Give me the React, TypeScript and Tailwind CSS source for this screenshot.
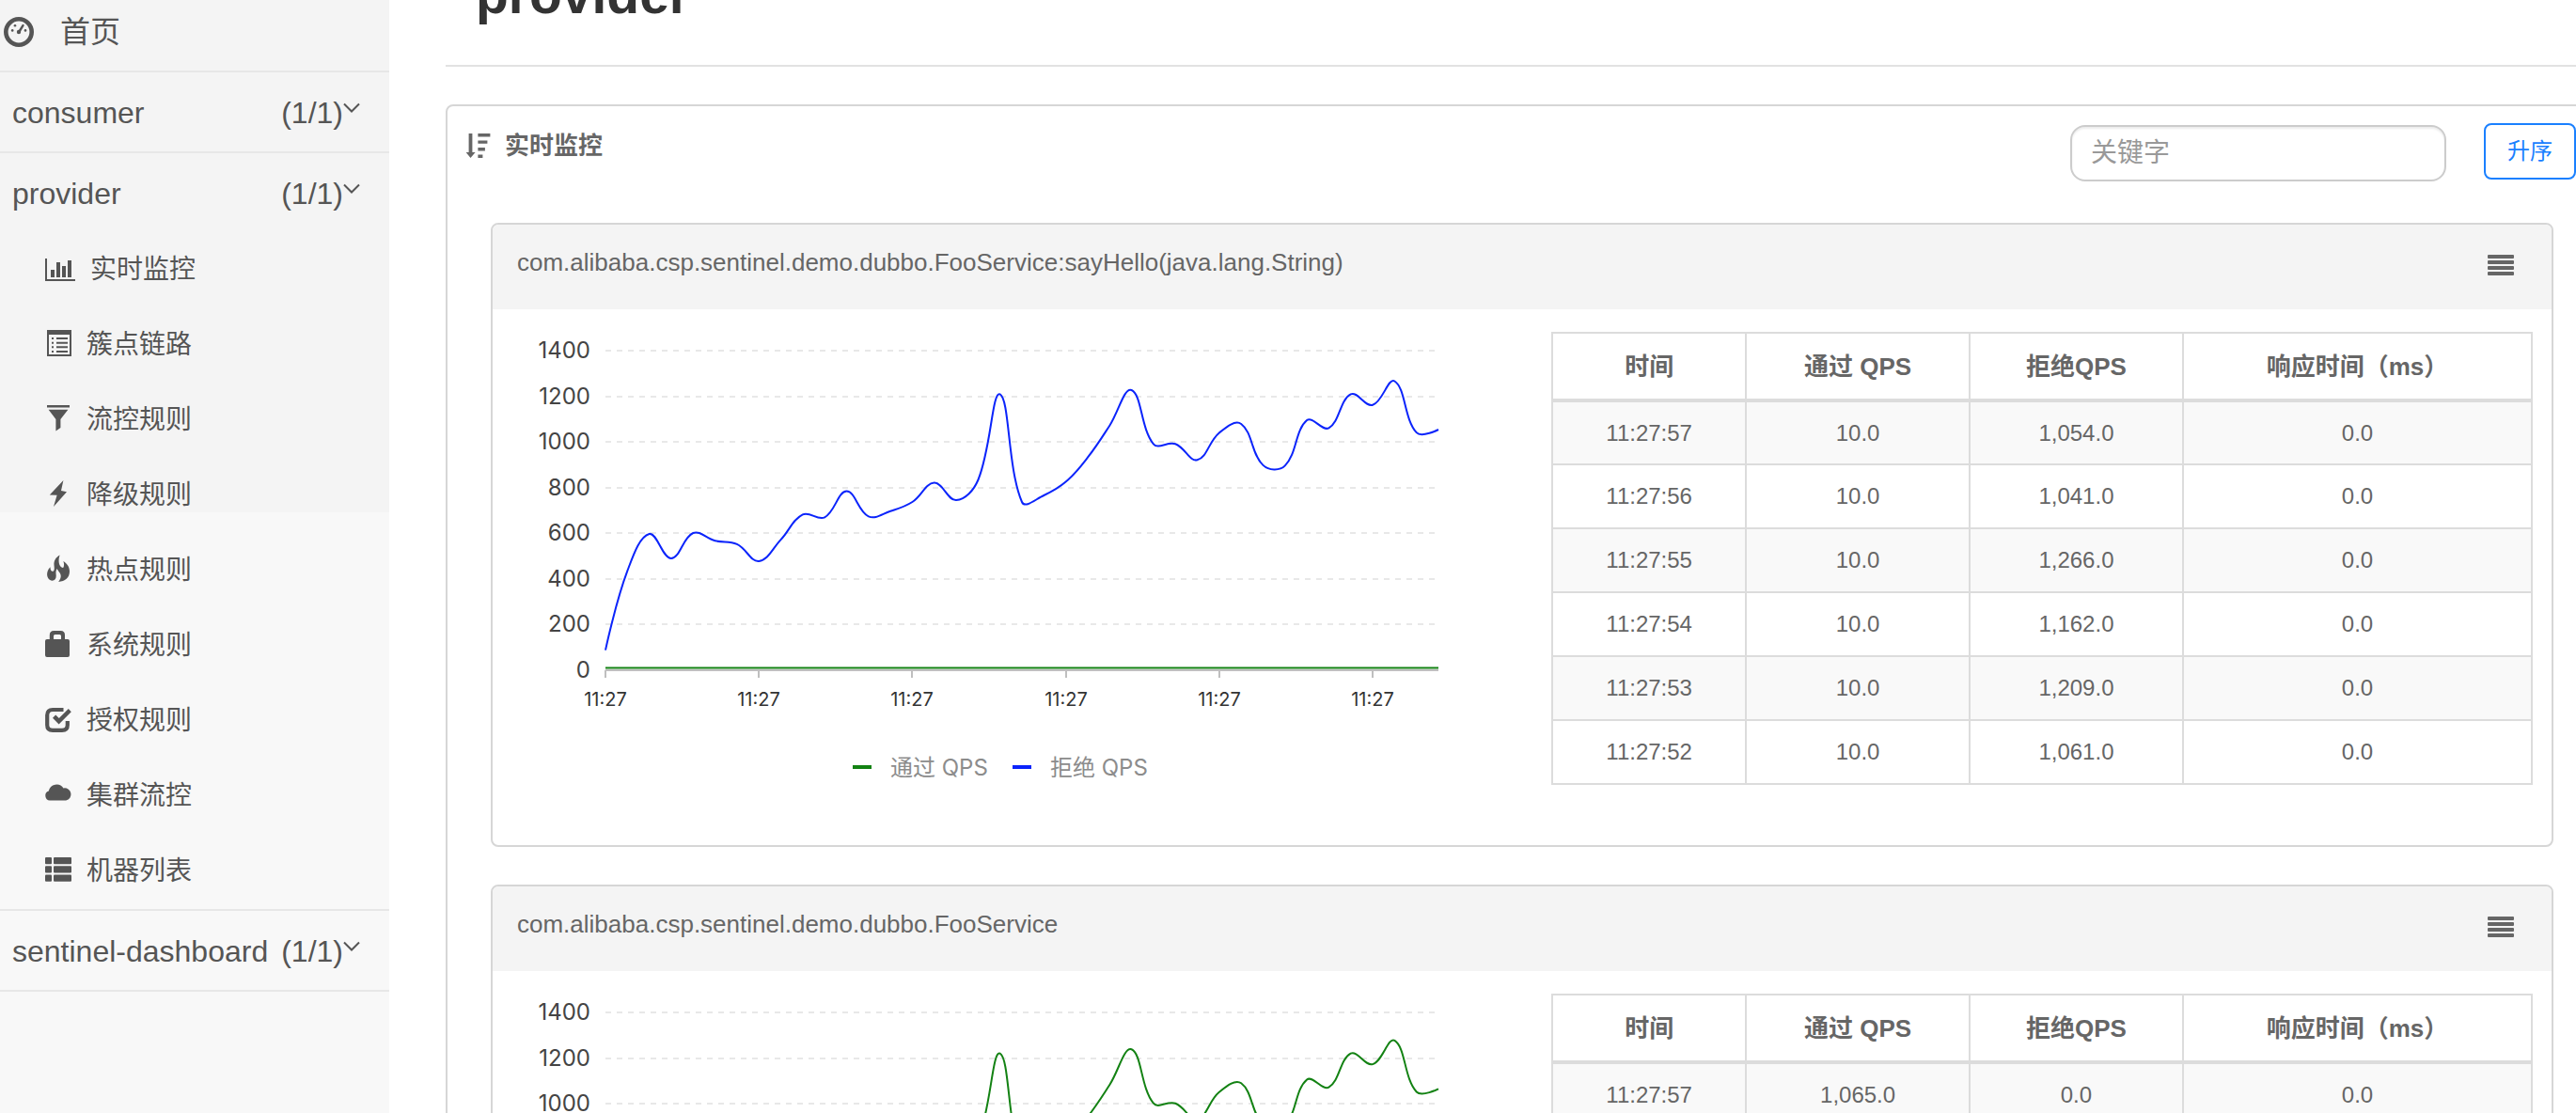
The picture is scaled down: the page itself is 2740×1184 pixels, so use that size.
import React from "react";

type Row = { time: string; pass: string; block: string; rt: string };

type Resource = {
  name: string;
  pass: number[];
  block: number[];
  rows: Row[];
};

const TOTALS = [
  88, 435, 597, 490, 601, 567, 552, 478, 572, 682, 670, 784, 674, 697, 737, 821, 745, 834, 1209, 737,
  766, 825, 932, 1072, 1227, 991, 991, 921, 1040, 1079, 898, 896, 1095, 1061, 1209, 1162, 1266, 1041, 1054,
];

const TIMES = ["11:27:57", "11:27:56", "11:27:55", "11:27:54", "11:27:53", "11:27:52"];
const BLOCKED = ["1,054.0", "1,041.0", "1,266.0", "1,162.0", "1,209.0", "1,061.0"];
const PASSED = ["1,065.0", "1,052.0", "1,277.0", "1,173.0", "1,220.0", "1,072.0"];

const RESOURCES: Resource[] = [
  {
    name: "com.alibaba.csp.sentinel.demo.dubbo.FooService:sayHello(java.lang.String)",
    pass: TOTALS.map(() => 10),
    block: TOTALS,
    rows: TIMES.map((time, i) => ({ time, pass: "10.0", block: BLOCKED[i], rt: "0.0" })),
  },
  {
    name: "com.alibaba.csp.sentinel.demo.dubbo.FooService",
    pass: TOTALS.map((v) => v + 11),
    block: TOTALS.map(() => 0),
    rows: TIMES.map((time, i) => ({ time, pass: PASSED[i], block: "0.0", rt: "0.0" })),
  },
];

/* ---------- chart ---------- */

const PLOT = { left: 120, right: 1006, top: 44, bottom: 384, max: 1400 };
const STEP = (PLOT.right - PLOT.left) / (TOTALS.length - 1);

function smoothPath(values: number[]): string {
  const pts = values.map((v, i) => [
    PLOT.left + i * STEP,
    PLOT.bottom - (v / PLOT.max) * (PLOT.bottom - PLOT.top),
  ]);
  const clampX = (x: number) => Math.min(PLOT.right, Math.max(PLOT.left, x));
  const clampY = (y: number) => Math.min(PLOT.bottom, Math.max(PLOT.top, y));
  const controls = pts.map((p, i) => {
    if (i === 0 || i === pts.length - 1) return [p, p];
    const prev = pts[i - 1];
    const next = pts[i + 1];
    const vx = (next[0] - prev[0]) * 0.4;
    const vy = (next[1] - prev[1]) * 0.4;
    const d0 = Math.hypot(p[0] - prev[0], p[1] - prev[1]);
    const d1 = Math.hypot(p[0] - next[0], p[1] - next[1]);
    const a = d0 / (d0 + d1);
    const b = d1 / (d0 + d1);
    return [
      [clampX(p[0] - vx * a), clampY(p[1] - vy * a)],
      [clampX(p[0] + vx * b), clampY(p[1] + vy * b)],
    ];
  });
  const f = (n: number) => n.toFixed(1);
  return pts
    .map((p, i) => {
      if (i === 0) return `M${f(p[0])} ${f(p[1])}`;
      const c1 = controls[i - 1][1];
      const c2 = controls[i][0];
      return `C${f(c1[0])} ${f(c1[1])} ${f(c2[0])} ${f(c2[1])} ${f(p[0])} ${f(p[1])}`;
    })
    .join("");
}

function QpsChart({ pass, block }: { pass: number[]; block: number[] }) {
  const levels = [0, 200, 400, 600, 800, 1000, 1200, 1400];
  const y = (v: number) => Math.round(PLOT.bottom - (v / PLOT.max) * (PLOT.bottom - PLOT.top));
  const ticks = [0, 7, 14, 21, 28, 35].map((i) => Math.round(PLOT.left + i * STEP));
  return (
    <svg
      viewBox="0 0 1126 520"
      className="block w-full font-['Inter','Noto_Sans_CJK_SC',sans-serif]"
      role="img"
      aria-label="QPS"
    >
      {levels.slice(1).map((v) => (
        <line key={v} x1={PLOT.left} x2={PLOT.right} y1={y(v)} y2={y(v)} stroke="#e8e8e8" strokeWidth="2" strokeDasharray="6 6" />
      ))}
      {levels.map((v) => (
        <text key={v} x="104" y={y(v) + 8} textAnchor="end" fontSize="24" fill="#444">
          {v}
        </text>
      ))}
      <line x1={PLOT.left} x2={PLOT.right} y1={PLOT.bottom} y2={PLOT.bottom} stroke="#bfbfbf" strokeWidth="2" />
      {ticks.map((x) => (
        <g key={x}>
          <line x1={x} x2={x} y1={PLOT.bottom} y2={PLOT.bottom + 8} stroke="#bfbfbf" strokeWidth="2" />
          <text x={x} y="422" textAnchor="middle" fontSize="20" fill="#333">
            11:27
          </text>
        </g>
      ))}
      <path d={smoothPath(block)} fill="none" stroke="#0b24fb" strokeWidth="2" />
      <path d={smoothPath(pass)} fill="none" stroke="#138213" strokeWidth="2" />
      <rect x="383" y="485" width="20" height="4" fill="#138213" />
      <text x="423" y="496" fontSize="24" fill="#8c8c8c">
        通过 QPS
      </text>
      <rect x="553" y="485" width="20" height="4" fill="#0b24fb" />
      <text x="593" y="496" fontSize="24" fill="#8c8c8c">
        拒绝 QPS
      </text>
    </svg>
  );
}

/* ---------- icons ---------- */

const DashboardIcon = () => (
  <svg viewBox="0 0 32 32" className="size-8 shrink-0" fill="currentColor" aria-hidden="true">
    <circle cx="16" cy="16" r="13.7" fill="none" stroke="currentColor" strokeWidth="4.6" />
    <circle cx="9.2" cy="14.4" r="1.3" />
    <circle cx="12" cy="9.2" r="1.3" />
    <circle cx="23" cy="14.4" r="1.3" />
    <circle cx="16" cy="16" r="2.2" />
    <path d="M15 15.5 19.6 8.2a1.2 1.2 0 0 1 2 1.2L17.4 16.6z" />
  </svg>
);

const BarChartIcon = () => (
  <svg viewBox="0 0 32 24" className="h-6 w-8 shrink-0" fill="currentColor" aria-hidden="true">
    <path d="M0 0h2v22h30v2H0zM6 12h4v8H6zM12 4h4v16h-4zM18 8h4v12h-4zM24 2h4v18h-4z" />
  </svg>
);

const Glyph = ({ children }: { children: React.ReactNode }) => (
  <svg viewBox="0 0 28 28" className="mb-1 size-7 shrink-0 overflow-visible" fill="currentColor" aria-hidden="true">
    {children}
  </svg>
);

const ListAltIcon = () => (
  <Glyph>
    <path fillRule="evenodd" d="M2 0h26v28H2zM4 5v21h22V5z" />
    <path d="M7 8h2v2H7zM12 8h12v2H12zM7 12.7h2v2H7zM12 12.7h12v2H12zM7 17.3h2v2H7zM12 17.3h12v2H12zM7 22h2v2H7zM12 22h12v2H12z" />
  </Glyph>
);

const FilterIcon = () => (
  <Glyph>
    <path d="M2 0h24v2.4H2zM3.6 4.8h20.8L16.4 15v9L11.4 27.6V15z" />
  </Glyph>
);

const FlashIcon = () => (
  <Glyph>
    <path d="M19.4 0 17 11l6 1.3L9 28l3.6-12.2L4.8 15.4z" />
  </Glyph>
);

const FireIcon = () => (
  <Glyph>
    <path d="M15.6-.5C11 2 9.200 6 9.500 10.100c.2 2.700.8 5-.6 6.300-1.500 1-3.600-.4-3.400-4.200C3.200 14.400 2 17.400 2.100 20.200c.2 3.500 2.300 6.100 5.400 6.600 2.700-.1 4.400-2 4.200-5.500-.1-2.500-.8-4.600.9-7.300.9 2.300 3.400 3.800 4 6.800.5 2.700-.8 4.900-2.400 7.200 7-.5 11.700-4.300 11.800-10.900 0-4.800-2.400-8.300-6.600-11 .9 2.600 1 5.300-.2 6.800-1.800.3-3.900-1.700-4.400-4.800-.4-2.800-.3-5.700.8-8.600z" />
  </Glyph>
);

const LockIcon = () => (
  <Glyph>
    <path fillRule="evenodd" d="M4.800 9V4.500Q4.800 0 9.300 0h7.200Q21 0 21 4.500V9h3q2 0 2 2v15q0 2-2 2H2q-2 0-2-2V11q0-2 2-2zM9 9h8V5.500Q17 4 15.500 4h-5Q9 4 9 5.500z" />
  </Glyph>
);

const CheckIcon = () => (
  <Glyph>
    <path d="M19.500 4H8Q2.200 4 2.200 9.800v10.400Q2.200 25.800 8 25.800h10Q23.800 25.800 23.800 20.200V16" fill="none" stroke="currentColor" strokeWidth="4.200" />
    <path d="m8 12.800 3.200-3.200 3.600 3.400L24.800 3l3 3.200-13.200 13.400z" />
  </Glyph>
);

const CloudIcon = () => (
  <Glyph>
    <path d="M5 20.500A5.200 5.200 0 0 1 3.800 10.400 8.600 8.600 0 0 1 19.500 7.500a6.600 6.600 0 1 1 2.700 13z" />
  </Glyph>
);

const ThListIcon = () => (
  <Glyph>
    {[1, 10.3, 19.6].map((y) => (
      <g key={y}>
        <rect x="0" y={y} width="7" height="7.200" rx="1" />
        <rect x="9" y={y} width="19" height="7.200" rx="1" />
      </g>
    ))}
  </Glyph>
);

const SortIcon = () => (
  <svg viewBox="0 0 26 26" className="size-[26px] shrink-0" fill="currentColor" aria-hidden="true">
    <path d="M2.600 0h3.800v20H9.600L4.500 26-.5 20h3.100zM12.400 0h13v3.400h-13zM12.400 7.400h10v3.400h-10zM12.400 15h7.500v3.400h-7.500zM12.400 22.600h5V26h-5z" />
  </svg>
);

const ChevronIcon = () => (
  <svg viewBox="0 0 18 12" className="mb-2.5 h-3 w-[18px] shrink-0" fill="none" stroke="currentColor" strokeWidth="2" aria-hidden="true">
    <path d="m1 1.500 8 8 8-8" />
  </svg>
);

const JustifyIcon = () => (
  <svg viewBox="0 0 28 22" className="block h-[22px] w-7" fill="currentColor" aria-hidden="true">
    {[0, 6, 12, 18].map((y) => (
      <rect key={y} x="0" y={y} width="28" height="4" rx="1" />
    ))}
  </svg>
);

/* ---------- sidebar ---------- */

const MENU = [
  { label: "实时监控", Icon: BarChartIcon },
  { label: "簇点链路", Icon: ListAltIcon },
  { label: "流控规则", Icon: FilterIcon },
  { label: "降级规则", Icon: FlashIcon },
  { label: "热点规则", Icon: FireIcon },
  { label: "系统规则", Icon: LockIcon },
  { label: "授权规则", Icon: CheckIcon },
  { label: "集群流控", Icon: CloudIcon },
  { label: "机器列表", Icon: ThListIcon },
];

function AppRow({ name, open }: { name: string; open?: boolean }) {
  return (
    <button
      type="button"
      aria-expanded={!!open}
      className="flex h-[84px] w-full items-center justify-between pt-0.5 pr-[31px] pl-[13px] text-[32px] leading-9"
    >
      <span>{name}</span>
      <span className="flex items-center">
        (1/1)
        <ChevronIcon />
      </span>
    </button>
  );
}

function Sidebar() {
  return (
    <nav className="w-[414px] shrink-0 bg-[linear-gradient(#f4f4f4_545px,#f8f8f8_545px)] text-[#555]">
      <ul>
        <li className="border-b-2 border-[#e7e7e7]">
          <a href="#home" className="flex h-[75px] items-center gap-7 pb-2 pl-1 text-[32px] leading-9">
            <DashboardIcon />
            首页
          </a>
        </li>
        <li className="border-b-2 border-[#e7e7e7]">
          <AppRow name="consumer" />
        </li>
        <li className="border-b-2 border-[#e7e7e7]">
          <AppRow name="provider" open />
          <ul>
            {MENU.map(({ label, Icon }) => (
              <li key={label}>
                <a href={`#${label}`} className="flex h-20 items-center gap-4 pl-12 text-[28px] leading-8">
                  <Icon />
                  {label}
                </a>
              </li>
            ))}
          </ul>
        </li>
        <li className="border-b-2 border-[#e7e7e7]">
          <AppRow name="sentinel-dashboard" />
        </li>
      </ul>
    </nav>
  );
}

/* ---------- content ---------- */

function MetricTable({ rows }: { rows: Row[] }) {
  const cell = "border-2 border-[#dcdcdc] p-0";
  return (
    <table className="w-full table-fixed border-collapse text-center text-[24px] leading-8 text-[#666]">
      <colgroup>
        <col className="w-[19.8%]" />
        <col className="w-[22.8%]" />
        <col className="w-[21.8%]" />
        <col />
      </colgroup>
      <thead>
        <tr className="h-[72px] text-[26px]">
          {["时间", "通过 QPS", "拒绝QPS", "响应时间（ms）"].map((h) => (
            <th key={h} scope="col" className="border-2 border-b-4 border-[#dcdcdc] p-0 font-bold">
              {h}
            </th>
          ))}
        </tr>
      </thead>
      <tbody>
        {rows.map((r) => (
          <tr key={r.time} className="h-[68px] odd:bg-[#f9f9f9]">
            <td className={cell}>{r.time}</td>
            <td className={cell}>{r.pass}</td>
            <td className={cell}>{r.block}</td>
            <td className={cell}>{r.rt}</td>
          </tr>
        ))}
      </tbody>
    </table>
  );
}

function ResourceCard({ resource }: { resource: Resource }) {
  return (
    <article className="overflow-hidden rounded-lg border-2 border-[#d6d6d6] bg-white">
      <header className="flex h-[90px] items-center justify-between bg-[#f4f4f4] pr-10 pl-[26px] text-[#666]">
        <h3 className="pb-2.5 text-[26px] leading-8">{resource.name}</h3>
        <button type="button" aria-label="菜单" className="pb-1">
          <JustifyIcon />
        </button>
      </header>
      <div className="grid min-h-[570px] grid-cols-[1126fr_1044fr] items-start pr-5">
        <QpsChart pass={resource.pass} block={resource.block} />
        <div className="pt-6">
          <MetricTable rows={resource.rows} />
        </div>
      </div>
    </article>
  );
}

export default function App() {
  return (
    <div className="flex min-h-screen overflow-x-clip bg-white font-['Liberation_Sans','Noto_Sans_CJK_SC',sans-serif]">
      <Sidebar />
      <main className="flex min-w-0 grow flex-col pl-[60px]">
        <h1 className="-mt-[34px] border-b-2 border-[#e2e2e2] pb-[47px] pl-8 text-[57px] leading-[56px] font-bold text-[#333]">
          provider
        </h1>
        <section className="mt-10 -mr-6 rounded-lg border-2 border-[#d6d6d6]">
          <div className="flex h-[124px] items-start pr-[22px] pl-5">
            <h2 className="mt-[26px] flex grow items-center gap-[15px] text-[26px] leading-8 font-bold text-[#666]">
              <SortIcon />
              实时监控
            </h2>
            <input
              type="text"
              aria-label="关键字"
              placeholder="关键字"
              className="mt-5 h-[60px] w-[400px] rounded-2xl border-2 border-[#ccc] px-5 text-[28px] shadow-[inset_0_2px_2px_rgba(0,0,0,0.08)] placeholder:text-[#999]"
            />
            <button
              type="button"
              className="mt-[18px] ml-10 h-[60px] rounded-lg border-2 border-[#1a80ff] px-[23px] text-[24px] leading-8 whitespace-nowrap text-[#1a80ff]"
            >
              升序
            </button>
          </div>
          <div className="flex flex-col gap-10 px-[46px] pb-10">
            {RESOURCES.map((r) => (
              <ResourceCard key={r.name} resource={r} />
            ))}
          </div>
        </section>
      </main>
    </div>
  );
}
